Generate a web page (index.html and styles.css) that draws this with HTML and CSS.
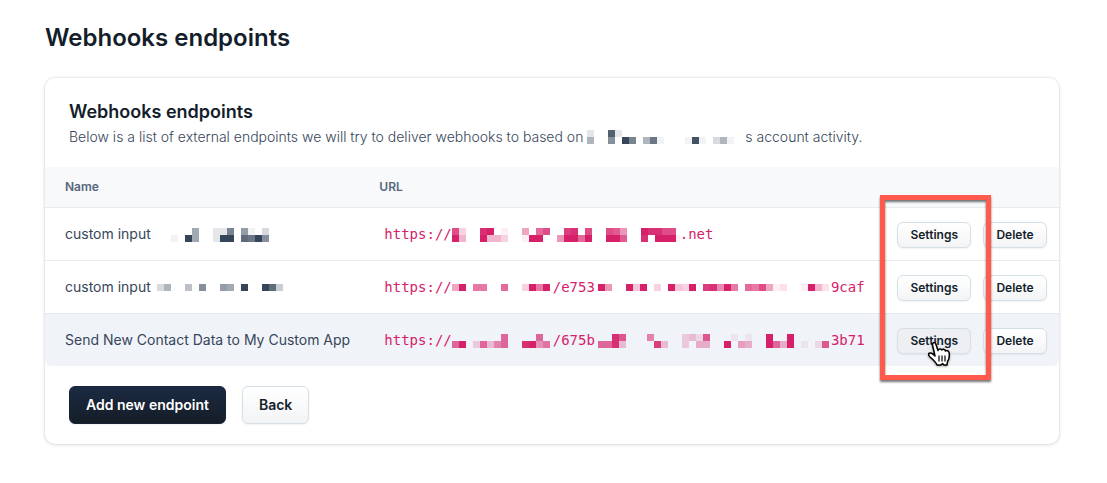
FILE: index.html
```
<!DOCTYPE html>
<html lang="en">
<head>
    <meta charset="UTF-8">
    <meta name="viewport" content="width=device-width, initial-scale=1">
    <title>Webhooks endpoints</title>
    <link rel="stylesheet" href="styles.css">
</head>
<body>
<main class="page">
    <h1 class="page_title">Webhooks endpoints</h1>

    <section class="card">
        <header class="card_head">
            <h2>Webhooks endpoints</h2>
            <p>Below is a list of external endpoints we will try to deliver webhooks to based on <svg class="mosaic mosaic_account" data-rows="2..d2................|6..9.fa.6b1...1e1.361"></svg>s account activity.</p>
        </header>

        <table class="endpoints">
            <thead>
                <tr>
                    <th class="col_name" scope="col">Name</th>
                    <th class="col_url" scope="col">URL</th>
                    <td class="col_actions"></td>
                </tr>
            </thead>
            <tbody>
                <tr>
                    <td>custom input<svg class="mosaic mosaic_name_far" data-rows="...7..22a.81.3|1.f7..2ff.cbf9"></svg></td>
                    <td><code>https://<svg class="mosaic" data-rows="c3..ef.1..6.ac..de.c..cb7..feecc.|f5..f553..1ff..7ffaf..ffb..e.fff1"></svg>.net</code></td>
                    <td class="actions"><div class="btn_row">
                        <button type="button" class="btn btn_small">Settings</button>
                        <button type="button" class="btn btn_small">Delete</button>
                    </div></td>
                </tr>
                <tr>
                    <td>custom input<svg class="mosaic mosaic_single mosaic_name" data-rows="36..5.9..87.f..fc4"></svg></td>
                    <td><code>https://<svg class="mosaic mosaic_single mosaic_host" data-rows="6f.99..a..3f9f"></svg>/e753<svg class="mosaic mosaic_single mosaic_path" data-rows="f7..f4f.3.f43f.de8f9.a9c612..1f52"></svg>9caf</code></td>
                    <td class="actions"><div class="btn_row">
                        <button type="button" class="btn btn_small">Settings</button>
                        <button type="button" class="btn btn_small">Delete</button>
                    </div></td>
                </tr>
                <tr class="current">
                    <td>Send New Contact Data to My Custom App</td>
                    <td><code>https://<svg class="mosaic mosaic_host" data-rows=".......a....a.|af.3a48a..ef79"></svg>/675b<svg class="mosaic mosaic_path" data-rows="..eb...8....342b...1.1..f..f.....|aae4....d4..3.55..f.65..fa5f.1.2b"></svg>3b71</code></td>
                    <td class="actions"><div class="btn_row">
                        <button type="button" class="btn btn_small btn_pressed">Settings</button>
                        <button type="button" class="btn btn_small">Delete</button>
                    </div></td>
                </tr>
            </tbody>
        </table>

        <footer class="card_foot">
            <button type="button" class="btn btn_primary">Add new endpoint</button>
            <button type="button" class="btn">Back</button>
        </footer>

        <div class="highlight"></div>
        <svg class="pointer" viewBox="0 0 24 26" width="24" height="26" aria-hidden="true">
            <path d="M8 15 L5.600 4.500 C4.800 1.300 8 .5 9 3.400 L11 9.500 C11.200 7.400 14.300 7.500 14.800 9 C15.400 7.700 18 8 18.500 10 C19.500 8.900 22 9.600 22.200 12 C22.500 15.500 22.500 18 20.500 20.500 L20 24 L17 24 L15.500 22.500 L14 24 L10 24 C9 21.500 6 18.500 3 16 C.5 13.700 1.500 11.200 4.500 12.200 C6 12.700 7 14 8 15 Z" fill="#fff" stroke="#000" stroke-width="1.500" stroke-linejoin="round"/>
            <path d="M12 14.500V20.500M15 14.500V20.500M18 14.500V20.500" fill="none" stroke="#000" stroke-width="1.200"/>
        </svg>
    </section>
</main>

<script src="mosaic.js"></script>
</body>
</html>
```
FILE: styles.css
```
* {
    box-sizing: border-box;
    margin: 0;
    padding: 0;
}

body {
    background: #fff;
    color: #141e2b;
    font-family: Inter, "Liberation Sans", sans-serif;
    font-size: 14px;
    line-height: 20px;
}

.page {
    padding: 23px 48px 38px 45px;
}

.page_title {
    margin-bottom: 25px;
    font-size: 24px;
    font-weight: 600;
    line-height: 30px;
}

.card {
    position: relative;
    border-radius: 10px;
    background: #fff;
    box-shadow: 0 0 3px rgba(20, 30, 45, .2), 0 2px 4px rgba(20, 30, 45, .06);
}

.card_head {
    padding: 22px 24px 20px;
}

.card_head h2 {
    font-size: 18px;
    font-weight: 600;
    line-height: 24px;
}

.card_head p {
    margin-top: 3px;
    color: #36465a;
    font-weight: 350;
}

/* table */
.endpoints {
    width: 100%;
    border-collapse: separate;
    border-spacing: 0;
    table-layout: fixed;
    color: #36465a;
}

.endpoints th,
.endpoints td {
    padding: 0 0 0 20px;
    text-align: left;
    white-space: nowrap;
}

.endpoints thead th,
.endpoints thead td {
    height: 40px;
    background: #f7f9fb;
    color: #56677c;
    font-size: 12px;
    font-weight: 600;
}

.endpoints tbody td {
    height: 53px;
    border-top: 1px solid #e6ebf0;
}

.endpoints .col_name {
    width: 31%;
}

.endpoints .col_actions {
    width: 182px;
}

.endpoints .actions {
    padding-top: 2px;
    padding-right: 12px;
}

.endpoints .current td {
    background: #f0f3f8;
}

.endpoints .current td:first-child {
    border-bottom-left-radius: 6px;
}

.endpoints .current td:last-child {
    border-bottom-right-radius: 6px;
}

.endpoints code {
    padding-left: 5px;
    color: #d6206a;
    font-family: "DejaVu Sans Mono", monospace;
    font-size: 14px;
}

/* hidden values */
.mosaic {
    width: 228px;
    height: 14px;
    vertical-align: -3px;
}

.mosaic_single {
    height: 7px;
    vertical-align: 1px;
}

.mosaic_account {
    width: 158px;
    vertical-align: -2px;
}

.mosaic_name {
    width: 126px;
    margin-left: 6px;
}

.mosaic_name_far {
    width: 98px;
    margin-left: 20px;
}

.mosaic_host {
    width: 101px;
}

.mosaic_path {
    width: 233px;
    margin-left: 3px;
}

/* buttons */
.btn_row {
    display: flex;
    justify-content: flex-end;
    gap: 12px;
}

.btn {
    padding: 8px 16px;
    border: 1px solid #d5dfe6;
    border-radius: 6px;
    background: linear-gradient(#fff, #f3f4f6);
    box-shadow: 0 1px 2px rgba(20, 30, 45, .06);
    color: #141e2b;
    font-family: inherit;
    font-size: 14px;
    font-weight: 600;
    line-height: 20px;
}

.btn_small {
    min-width: 64px;
    padding: 4px 12px;
    font-size: 12px;
    line-height: 16px;
}

.btn_pressed {
    background: #edeff3;
}

.btn_primary {
    border-color: #18243a;
    background: linear-gradient(#1b2a43, #151d27);
    color: #fff;
}

.card_foot {
    display: flex;
    gap: 16px;
    padding: 20px 24px;
}

/* marker over the settings column */
.highlight {
    position: absolute;
    top: 117px;
    right: 68px;
    width: 111px;
    height: 185px;
    border: 5px solid #ff5a4b;
    filter: drop-shadow(0 2px 1px rgba(0, 0, 0, .55));
    pointer-events: none;
}

.pointer {
    position: absolute;
    top: 263px;
    right: 108px;
    filter: drop-shadow(0 1px 1px rgba(0, 0, 0, .35));
    pointer-events: none;
}
```
FILE: mosaic.js
```
// one character per cell: hex digit = strength of the text colour, dot = empty
var mosaics = document.querySelectorAll('.mosaic');
var cell = 7;

for (var i = 0; i < mosaics.length; i++) {
    var rows = mosaics[i].getAttribute('data-rows').split('|');
    for (var y = 0; y < rows.length; y++) {
        for (var x = 0; x < rows[y].length; x++) {
            if (rows[y][x] === '.') {
                continue;
            }
            var rect = document.createElementNS('http://www.w3.org/2000/svg', 'rect');
            rect.setAttribute('x', x * cell);
            rect.setAttribute('y', y * cell);
            rect.setAttribute('width', cell);
            rect.setAttribute('height', cell);
            rect.setAttribute('fill', 'currentColor');
            rect.setAttribute('fill-opacity', parseInt(rows[y][x], 16) / 15);
            rect.setAttribute('shape-rendering', 'crispEdges');
            mosaics[i].appendChild(rect);
        }
    }
}
```
